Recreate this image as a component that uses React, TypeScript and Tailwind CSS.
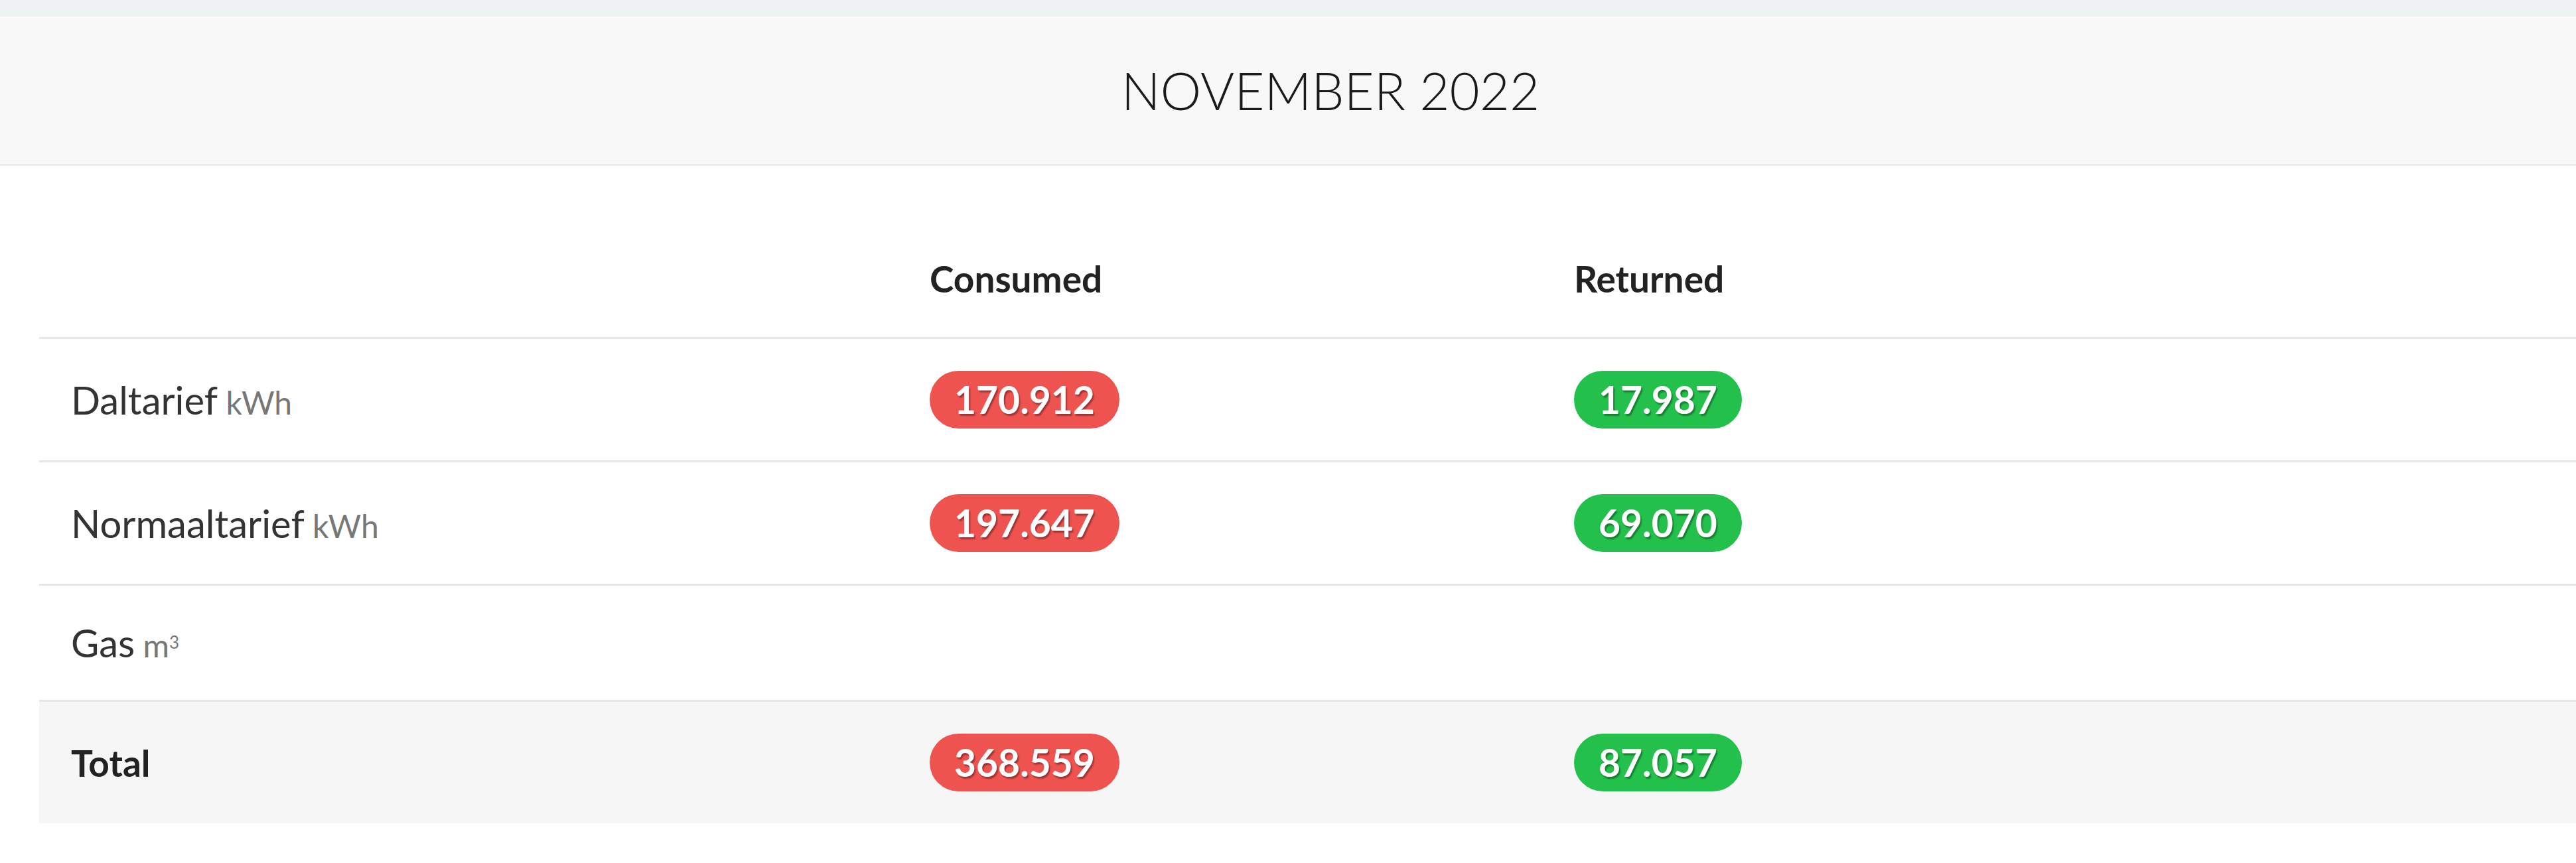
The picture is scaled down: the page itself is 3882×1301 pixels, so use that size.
type Row = {
  label: string;
  unit?: "kWh" | "m3";
  consumed?: string;
  returned?: string;
  total?: boolean;
};

const rows: Row[] = [
  { label: "Daltarief", unit: "kWh", consumed: "170.912", returned: "17.987" },
  { label: "Normaaltarief", unit: "kWh", consumed: "197.647", returned: "69.070" },
  { label: "Gas", unit: "m3" },
  { label: "Total", consumed: "368.559", returned: "87.057", total: true },
];

function Badge({ value, tone }: { value: string; tone: "red" | "green" }) {
  return (
    <span
      className={
        "inline-block align-middle h-[87px] px-[37px] rounded-full text-[57px] leading-[87px] font-bold text-white [text-shadow:2px_3px_2px_rgba(0,0,0,0.35)] " +
        (tone === "red" ? "bg-[#ef5350]" : "bg-[#23c04b]")
      }
    >
      {value}
    </span>
  );
}

function Unit({ unit }: { unit: Row["unit"] }) {
  if (unit === "kWh") {
    return <span className="text-[48px] leading-none text-[#777]"> kWh</span>;
  }
  if (unit === "m3") {
    return (
      <span className="text-[48px] leading-none text-[#777]">
        {" "}m<sup className="text-[26px] leading-none">3</sup>
      </span>
    );
  }
  return null;
}

export default function App() {
  return (
    <div className="min-h-screen bg-white font-['Lato',sans-serif] text-[#333]">
      <div className="h-[25px] bg-[#eef2f3]" />
      <div className="h-[225px] bg-[#f8f8f8] border-b-[3px] border-[#ebebeb] flex items-center justify-center pl-[128px]">
        <h1 className="text-[78px] font-light text-[#1a1a1a] leading-none">NOVEMBER 2022</h1>
      </div>

      <div className="pl-[59px] pt-[82px]">
        <table className="w-full border-collapse text-left">
          <colgroup>
            <col className="w-[1294px]" />
            <col className="w-[971px]" />
            <col className="w-[971px]" />
            <col />
          </colgroup>
          <thead>
            <tr className="border-b-[3px] border-[#e6e6e6]">
              <th className="py-[48px] px-[48px] leading-[80px]" />
              <th className="py-[48px] px-[48px] text-[55px] leading-[80px] font-bold text-[#222]">
                Consumed
              </th>
              <th className="py-[48px] px-[48px] text-[55px] leading-[80px] font-bold text-[#222]">
                Returned
              </th>
              <th />
            </tr>
          </thead>
          <tbody>
            {rows.map((row) => (
              <tr
                key={row.label}
                className={
                  row.total ? "bg-[#f6f6f6]" : "border-b-[3px] border-[#e6e6e6]"
                }
              >
                <td
                  className={
                    "py-[48px] px-[48px] leading-[76px] " +
                    (row.total ? "text-[55px] font-bold text-[#222]" : "text-[58px]")
                  }
                >
                  {row.label}
                  <Unit unit={row.unit} />
                </td>
                <td className="py-[48px] px-[48px] leading-[76px]">
                  {row.consumed && <Badge value={row.consumed} tone="red" />}
                </td>
                <td className="py-[48px] px-[48px] leading-[76px]">
                  {row.returned && <Badge value={row.returned} tone="green" />}
                </td>
                <td />
              </tr>
            ))}
          </tbody>
        </table>
      </div>
    </div>
  );
}
